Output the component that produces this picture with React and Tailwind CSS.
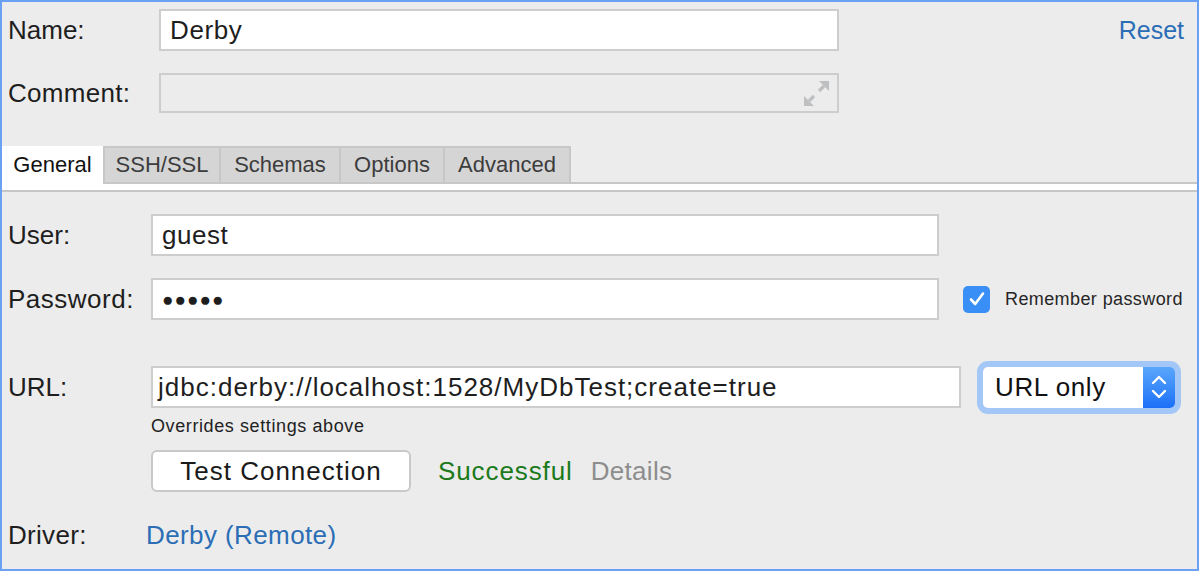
import React from "react";

function ExpandIcon() {
  return (
    <svg width="25" height="25" viewBox="0 0 25 25" fill="#bdbfc1">
      <polygon points="25,0 25,10 15,0" />
      <line x1="20" y1="5" x2="15" y2="10" stroke="#bdbfc1" strokeWidth="3.2" />
      <polygon points="0,25 0,15 10,25" />
      <line x1="5" y1="20" x2="10" y2="15" stroke="#bdbfc1" strokeWidth="3.2" />
    </svg>
  );
}

function Check() {
  return (
    <svg width="18" height="18" viewBox="0 0 18 18" fill="none">
      <path d="M3 9.5 L7.2 14 L15 3.5" stroke="white" strokeWidth="2.6" strokeLinecap="round" strokeLinejoin="round" />
    </svg>
  );
}

function UpDown() {
  return (
    <svg width="16" height="26" viewBox="0 0 16 26" fill="none">
      <path d="M2 9 L8 3 L14 9" stroke="white" strokeWidth="2.4" strokeLinecap="round" strokeLinejoin="round" />
      <path d="M2 17 L8 23 L14 17" stroke="white" strokeWidth="2.4" strokeLinecap="round" strokeLinejoin="round" />
    </svg>
  );
}

export default function App() {
  const tabs = [
    { name: "SSH/SSL", w: "w-[116px]" },
    { name: "Schemas", w: "w-[120px]" },
    { name: "Options", w: "w-[104px]" },
  ];
  return (
    <div className="w-[1199px] h-[571px] border-2 border-[#6ba1f4] bg-[#ececec] flex flex-col text-[26px] text-[#1e1e1e] font-['Liberation_Sans',Arial,sans-serif] overflow-hidden">
      {/* Top section */}
      <div className="pt-[7px] pl-[6px] pr-[13px]">
        <div className="flex items-center h-[42px]">
          <div className="w-[151px] leading-none">Name:</div>
          <div className="w-[680px] h-[42px] bg-white border-2 border-[#cdcdcd] flex items-center pl-[9px] leading-none tracking-[0.6px]">
            Derby
          </div>
          <div className="flex-1" />
          <div className="text-[#2b6eb5] text-[25px] leading-none">Reset</div>
        </div>
        <div className="flex items-center h-[40px] mt-[22px]">
          <div className="w-[151px] leading-none tracking-[0.3px]">Comment:</div>
          <div className="w-[680px] h-[40px] border-2 border-[#cdcdcd] flex items-center justify-end pr-[8px]">
            <ExpandIcon />
          </div>
        </div>
      </div>

      {/* Tabs */}
      <div className="mt-[33px] flex h-[38px] text-[22px] leading-none">
        <div className="w-[101px] bg-white flex items-center justify-center text-[#111]">General</div>
        {tabs.map((t) => (
          <div
            key={t.name}
            className={`${t.w} bg-[#d5d5d5] border-t-2 border-l-2 border-b-2 border-[#c7c7c7] flex items-center justify-center text-[#3c3c3c]`}
          >
            {t.name}
          </div>
        ))}
        <div className="w-[128px] bg-[#d5d5d5] border-t-2 border-l-2 border-r-2 border-b-2 border-[#c7c7c7] flex items-center justify-center text-[#3c3c3c]">
          Advanced
        </div>
        <div className="flex-1 border-b-2 border-[#c7c7c7]" />
      </div>
      <div className="h-[6px] bg-white" />
      <div className="h-[2px] bg-[#c6c6c6]" />

      {/* General panel */}
      <div className="pl-[6px] pt-[22px]">
        <div className="flex items-center h-[42px]">
          <div className="w-[143px] leading-none">User:</div>
          <div className="w-[788px] h-[42px] bg-white border-2 border-[#cdcdcd] flex items-center pl-[9px] leading-none tracking-[0.5px]">
            guest
          </div>
        </div>
        <div className="flex items-center h-[42px] mt-[22px]">
          <div className="w-[143px] leading-none tracking-[0.5px]">Password:</div>
          <div className="w-[788px] h-[42px] bg-white border-2 border-[#cdcdcd] flex items-center pl-[9px] leading-none tracking-[1px] text-[19px]">
            ●●●●●
          </div>
          <div className="ml-[24px] w-[27px] h-[27px] rounded-[5px] bg-[#3a8ff7] flex items-center justify-center">
            <Check />
          </div>
          <div className="ml-[15px] text-[18px] leading-none text-[#262626] tracking-[0.4px]">Remember password</div>
        </div>
        <div className="flex items-center h-[54px] mt-[40px]">
          <div className="w-[143px] leading-none">URL:</div>
          <div className="w-[810px] h-[42px] bg-white border-2 border-[#cdcdcd] flex items-center pl-[5px] leading-none tracking-[1px]">
            jdbc:derby://localhost:1528/MyDbTest;create=true
          </div>
          <div className="ml-[16px] p-[6px] rounded-[11px] bg-[#a3c7f7]">
            <div className="w-[192px] h-[41px] rounded-[5px] bg-white flex overflow-hidden">
              <div className="flex-1 flex items-center pl-[12px] leading-none text-[#111] tracking-[0.6px]">URL only</div>
              <div className="w-[32px] h-full bg-gradient-to-b from-[#5aa6fb] to-[#1a6ff7] flex items-center justify-center">
                <UpDown />
              </div>
            </div>
          </div>
        </div>
        <div className="ml-[143px] mt-[1px] text-[18px] leading-[22px] text-[#222] tracking-[0.6px]">Overrides settings above</div>
        <div className="flex items-center h-[42px] mt-[13px] ml-[143px]">
          <div className="w-[260px] h-[42px] rounded-[6px] bg-white border-2 border-[#c9c9c9] flex items-center justify-center leading-none text-[#1a1a1a] tracking-[1px]">
            Test Connection
          </div>
          <div className="ml-[27px] text-[#1b7a1b] leading-none tracking-[0.9px]">Successful</div>
          <div className="ml-[18px] text-[#8d8d8d] leading-none tracking-[0.3px]">Details</div>
        </div>
        <div className="flex items-center h-[42px] mt-[22px]">
          <div className="w-[138px] leading-none tracking-[0.3px]">Driver:</div>
          <div className="text-[#2b6eb5] leading-none tracking-[0.4px]">Derby (Remote)</div>
        </div>
      </div>
    </div>
  );
}
